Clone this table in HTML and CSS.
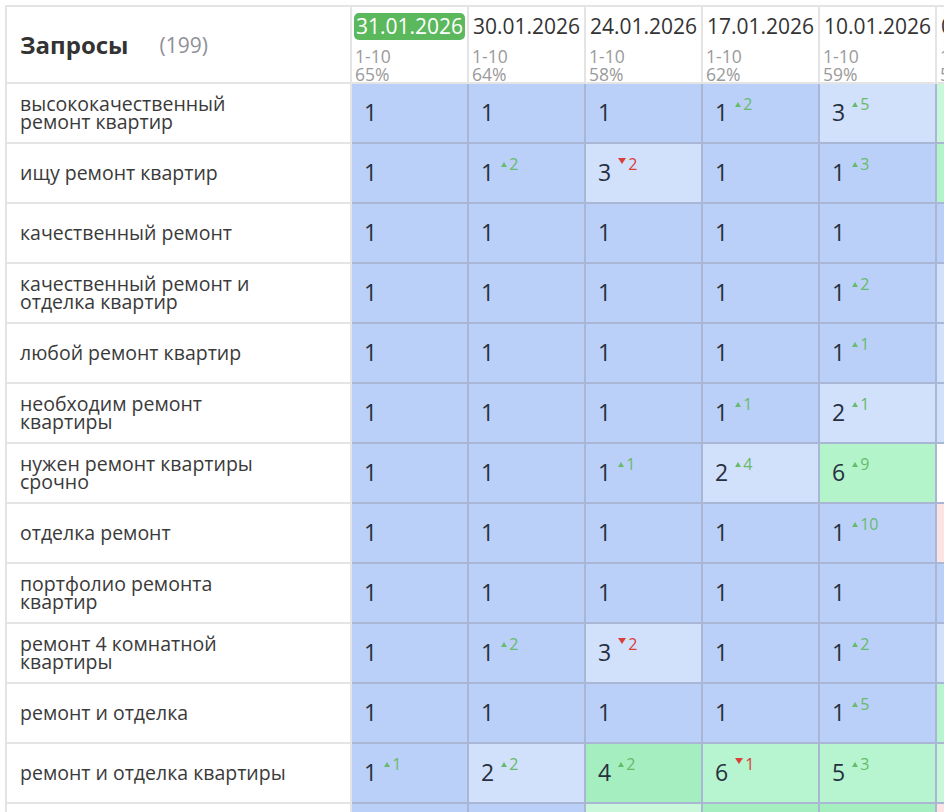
FILE: index.html
```html
<!DOCTYPE html>
<html lang="ru">
<head>
<meta charset="utf-8">
<title>Запросы</title>
<link rel="stylesheet" href="styles.css">
</head>
<body>
<div class="grid">
  <div class="hq"><span class="title">Запросы</span><span class="count">(199)</span></div>
  <div class="hd"><span class="date current">31.01.2026</span><div class="sub">1-10<br>65%</div></div>
  <div class="hd"><span class="date">30.01.2026</span><div class="sub">1-10<br>64%</div></div>
  <div class="hd"><span class="date">24.01.2026</span><div class="sub">1-10<br>58%</div></div>
  <div class="hd"><span class="date">17.01.2026</span><div class="sub">1-10<br>62%</div></div>
  <div class="hd"><span class="date">10.01.2026</span><div class="sub">1-10<br>59%</div></div>
  <div class="hd"><span class="date">03.01.2026</span><div class="sub">1-10<br>55%</div></div>

  <div class="q"><span class="qt">высококачественный ремонт квартир</span></div>
  <div class="c b"><span class="v"><span class="n">1</span></span></div>
  <div class="c b"><span class="v"><span class="n">1</span></span></div>
  <div class="c b"><span class="v"><span class="n">1</span></span></div>
  <div class="c b"><span class="v"><span class="n">1</span><span class="d up"><i></i>2</span></span></div>
  <div class="c lb"><span class="v"><span class="n">3</span><span class="d up"><i></i>5</span></span></div>
  <div class="c m"><span class="v"><span class="n">4</span></span></div>

  <div class="q"><span class="qt">ищу ремонт квартир</span></div>
  <div class="c b"><span class="v"><span class="n">1</span></span></div>
  <div class="c b"><span class="v"><span class="n">1</span><span class="d up"><i></i>2</span></span></div>
  <div class="c lb"><span class="v"><span class="n">3</span><span class="d down"><i></i>2</span></span></div>
  <div class="c b"><span class="v"><span class="n">1</span></span></div>
  <div class="c b"><span class="v"><span class="n">1</span><span class="d up"><i></i>3</span></span></div>
  <div class="c g"><span class="v"><span class="n">4</span></span></div>

  <div class="q"><span class="qt">качественный ремонт</span></div>
  <div class="c b"><span class="v"><span class="n">1</span></span></div>
  <div class="c b"><span class="v"><span class="n">1</span></span></div>
  <div class="c b"><span class="v"><span class="n">1</span></span></div>
  <div class="c b"><span class="v"><span class="n">1</span></span></div>
  <div class="c b"><span class="v"><span class="n">1</span></span></div>
  <div class="c b"><span class="v"><span class="n">1</span></span></div>

  <div class="q"><span class="qt">качественный ремонт и отделка квартир</span></div>
  <div class="c b"><span class="v"><span class="n">1</span></span></div>
  <div class="c b"><span class="v"><span class="n">1</span></span></div>
  <div class="c b"><span class="v"><span class="n">1</span></span></div>
  <div class="c b"><span class="v"><span class="n">1</span></span></div>
  <div class="c b"><span class="v"><span class="n">1</span><span class="d up"><i></i>2</span></span></div>
  <div class="c lb"><span class="v"><span class="n">3</span></span></div>

  <div class="q"><span class="qt">любой ремонт квартир</span></div>
  <div class="c b"><span class="v"><span class="n">1</span></span></div>
  <div class="c b"><span class="v"><span class="n">1</span></span></div>
  <div class="c b"><span class="v"><span class="n">1</span></span></div>
  <div class="c b"><span class="v"><span class="n">1</span></span></div>
  <div class="c b"><span class="v"><span class="n">1</span><span class="d up"><i></i>1</span></span></div>
  <div class="c lb"><span class="v"><span class="n">2</span></span></div>

  <div class="q"><span class="qt">необходим ремонт квартиры</span></div>
  <div class="c b"><span class="v"><span class="n">1</span></span></div>
  <div class="c b"><span class="v"><span class="n">1</span></span></div>
  <div class="c b"><span class="v"><span class="n">1</span></span></div>
  <div class="c b"><span class="v"><span class="n">1</span><span class="d up"><i></i>1</span></span></div>
  <div class="c lb"><span class="v"><span class="n">2</span><span class="d up"><i></i>1</span></span></div>
  <div class="c lb"><span class="v"><span class="n">3</span></span></div>

  <div class="q"><span class="qt">нужен ремонт квартиры срочно</span></div>
  <div class="c b"><span class="v"><span class="n">1</span></span></div>
  <div class="c b"><span class="v"><span class="n">1</span></span></div>
  <div class="c b"><span class="v"><span class="n">1</span><span class="d up"><i></i>1</span></span></div>
  <div class="c lb"><span class="v"><span class="n">2</span><span class="d up"><i></i>4</span></span></div>
  <div class="c g"><span class="v"><span class="n">6</span><span class="d up"><i></i>9</span></span></div>
  <div class="c w"><span class="v"><span class="n">15</span></span></div>

  <div class="q"><span class="qt">отделка ремонт</span></div>
  <div class="c b"><span class="v"><span class="n">1</span></span></div>
  <div class="c b"><span class="v"><span class="n">1</span></span></div>
  <div class="c b"><span class="v"><span class="n">1</span></span></div>
  <div class="c b"><span class="v"><span class="n">1</span></span></div>
  <div class="c b"><span class="v"><span class="n">1</span><span class="d up"><i></i>10</span></span></div>
  <div class="c p"><span class="v"><span class="n">11</span></span></div>

  <div class="q"><span class="qt">портфолио ремонта квартир</span></div>
  <div class="c b"><span class="v"><span class="n">1</span></span></div>
  <div class="c b"><span class="v"><span class="n">1</span></span></div>
  <div class="c b"><span class="v"><span class="n">1</span></span></div>
  <div class="c b"><span class="v"><span class="n">1</span></span></div>
  <div class="c b"><span class="v"><span class="n">1</span></span></div>
  <div class="c b"><span class="v"><span class="n">1</span></span></div>

  <div class="q"><span class="qt">ремонт 4 комнатной квартиры</span></div>
  <div class="c b"><span class="v"><span class="n">1</span></span></div>
  <div class="c b"><span class="v"><span class="n">1</span><span class="d up"><i></i>2</span></span></div>
  <div class="c lb"><span class="v"><span class="n">3</span><span class="d down"><i></i>2</span></span></div>
  <div class="c b"><span class="v"><span class="n">1</span></span></div>
  <div class="c b"><span class="v"><span class="n">1</span><span class="d up"><i></i>2</span></span></div>
  <div class="c lb"><span class="v"><span class="n">3</span></span></div>

  <div class="q"><span class="qt">ремонт и отделка</span></div>
  <div class="c b"><span class="v"><span class="n">1</span></span></div>
  <div class="c b"><span class="v"><span class="n">1</span></span></div>
  <div class="c b"><span class="v"><span class="n">1</span></span></div>
  <div class="c b"><span class="v"><span class="n">1</span></span></div>
  <div class="c b"><span class="v"><span class="n">1</span><span class="d up"><i></i>5</span></span></div>
  <div class="c lg"><span class="v"><span class="n">6</span></span></div>

  <div class="q"><span class="qt">ремонт и отделка квартиры</span></div>
  <div class="c b"><span class="v"><span class="n">1</span><span class="d up"><i></i>1</span></span></div>
  <div class="c lb"><span class="v"><span class="n">2</span><span class="d up"><i></i>2</span></span></div>
  <div class="c dg"><span class="v"><span class="n">4</span><span class="d up"><i></i>2</span></span></div>
  <div class="c lg"><span class="v"><span class="n">6</span><span class="d down"><i></i>1</span></span></div>
  <div class="c lg"><span class="v"><span class="n">5</span><span class="d up"><i></i>3</span></span></div>
  <div class="c m"><span class="v"><span class="n">8</span></span></div>

  <div class="q"><span class="qt">ремонт квартир</span></div>
  <div class="c b"><span class="v"><span class="n">1</span></span></div>
  <div class="c b"><span class="v"><span class="n">1</span></span></div>
  <div class="c m"><span class="v"><span class="n">7</span></span></div>
  <div class="c dg"><span class="v"><span class="n">4</span></span></div>
  <div class="c dg"><span class="v"><span class="n">4</span></span></div>
  <div class="c p"><span class="v"><span class="n">12</span></span></div>
</div>
</body>
</html>
```

FILE: styles.css
```css
html, body {
  margin: 0;
  padding: 0;
  overflow: hidden;
  background: #ffffff;
}

* { box-sizing: border-box; }

.grid {
  margin: 5px 0 0 5px;
  display: grid;
  grid-template-columns: 345px repeat(6, 117px);
  grid-template-rows: 77px;
  grid-auto-rows: 60px;
  border-left: 2px solid #e4e4e4;
  border-top: 2px solid #e4e4e4;
  width: max-content;
  font-family: "Open Sans", "Noto Sans", sans-serif;
}

.hq {
  display: flex;
  align-items: center;
  padding-left: 13px;
  border-right: 2px solid #e4e4e4;
  border-bottom: 2px solid #e4e4e4;
}

.title {
  font-size: 24px;
  font-weight: 700;
  color: #333333;
}

.count {
  margin-left: 31px;
  font-size: 21px;
  color: #8f8f99;
}

.hd {
  padding: 6px 0 0 2px;
  border-right: 2px solid #e4e4e4;
  border-bottom: 2px solid #e4e4e4;
}

.date {
  display: block;
  width: max-content;
  font-size: 21px;
  line-height: 27px;
  padding: 0 2px;
  color: #333333;
  white-space: nowrap;
}

.date.current {
  background: #5cb85c;
  color: #ffffff;
  border-radius: 5px;
}

.sub {
  margin-top: 7px;
  padding-left: 1px;
  font-size: 17.5px;
  line-height: 18px;
  color: #9a9a9a;
}

.q {
  display: flex;
  align-items: center;
  padding-left: 13px;
  font-size: 19.5px;
  line-height: 18px;
  color: #3a3a3a;
  border-right: 2px solid #e4e4e4;
  border-bottom: 2px solid #e4e4e4;
}

.qt {
  max-width: 272px;
}

.c {
  display: flex;
  align-items: center;
  padding-left: 12px;
  border-right: 2px solid #a9b7d4;
  border-bottom: 2px solid #a9b7d4;
  white-space: nowrap;
}

.v {
  line-height: 30px;
}

.n {
  font-size: 23px;
  color: #27303f;
}

.d {
  margin-left: 7px;
  font-size: 16px;
  line-height: 12px;
  vertical-align: 11px;
}

.d i {
  display: inline-block;
  margin-right: 2px;
}

.up { color: #67bb6a; }
.up i {
  border-left: 3px solid transparent;
  border-right: 3px solid transparent;
  border-bottom: 5px solid #67bb6a;
  vertical-align: 3px;
}

.down { color: #d9403a; }
.down i {
  border-left: 4px solid transparent;
  border-right: 4px solid transparent;
  border-top: 6px solid #d9403a;
  vertical-align: 6px;
}

.b  { background: #bad0f8; }
.lb { background: #d1e0fb; }
.g  { background: #b3f4cb; }
.dg { background: #a5eec0; }
.lg { background: #b6f5cf; }
.m  { background: #c9f7da; }
.p  { background: #fde3e3; }
.w  { background: #ffffff; }
```
